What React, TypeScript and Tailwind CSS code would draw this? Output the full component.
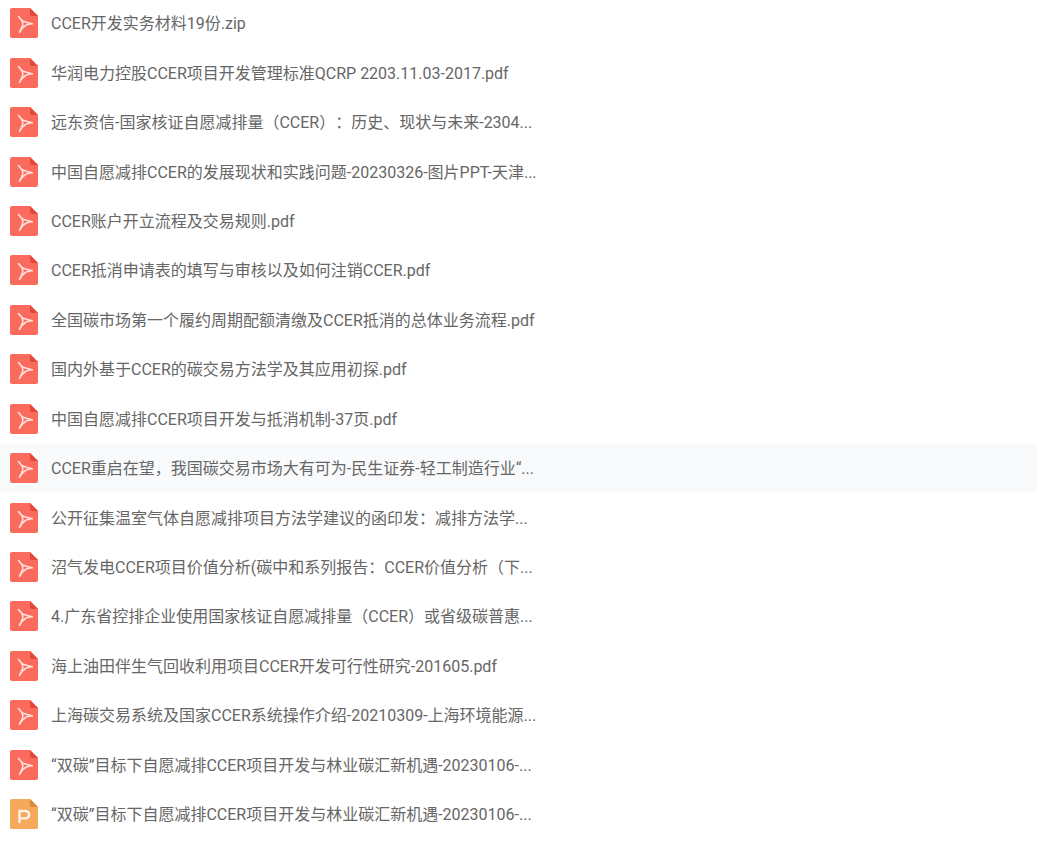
const files: { name: string; type: "pdf" | "ppt"; hover?: boolean }[] = [
  { name: "CCER开发实务材料19份.zip", type: "pdf" },
  { name: "华润电力控股CCER项目开发管理标准QCRP 2203.11.03-2017.pdf", type: "pdf" },
  { name: "远东资信-国家核证自愿减排量（CCER）：历史、现状与未来-2304...", type: "pdf" },
  { name: "中国自愿减排CCER的发展现状和实践问题-20230326-图片PPT-天津...", type: "pdf" },
  { name: "CCER账户开立流程及交易规则.pdf", type: "pdf" },
  { name: "CCER抵消申请表的填写与审核以及如何注销CCER.pdf", type: "pdf" },
  { name: "全国碳市场第一个履约周期配额清缴及CCER抵消的总体业务流程.pdf", type: "pdf" },
  { name: "国内外基于CCER的碳交易方法学及其应用初探.pdf", type: "pdf" },
  { name: "中国自愿减排CCER项目开发与抵消机制-37页.pdf", type: "pdf" },
  { name: "CCER重启在望，我国碳交易市场大有可为-民生证券-轻工制造行业“...", type: "pdf", hover: true },
  { name: "公开征集温室气体自愿减排项目方法学建议的函印发：减排方法学...", type: "pdf" },
  { name: "沼气发电CCER项目价值分析(碳中和系列报告：CCER价值分析（下...", type: "pdf" },
  { name: "4.广东省控排企业使用国家核证自愿减排量（CCER）或省级碳普惠...", type: "pdf" },
  { name: "海上油田伴生气回收利用项目CCER开发可行性研究-201605.pdf", type: "pdf" },
  { name: "上海碳交易系统及国家CCER系统操作介绍-20210309-上海环境能源...", type: "pdf" },
  { name: "“双碳”目标下自愿减排CCER项目开发与林业碳汇新机遇-20230106-...", type: "pdf" },
  { name: "“双碳”目标下自愿减排CCER项目开发与林业碳汇新机遇-20230106-...", type: "ppt" },
];

function FileIcon({ type }: { type: "pdf" | "ppt" }) {
  const body = type === "pdf" ? "#fb6b5d" : "#f4a95d";
  const fold = type === "pdf" ? "#e2483a" : "#d9873a";
  return (
    <svg width="28" height="30" viewBox="0 0 28 30" className="shrink-0">
      <path d="M2 0H20L28 8V28a2 2 0 0 1-2 2H2a2 2 0 0 1-2-2V2a2 2 0 0 1 2-2Z" fill={body} />
      <path d="M20 0L28 8H22a2 2 0 0 1-2-2Z" fill={fold} />
      {type === "pdf" ? (
        <path
          d="M8.5 8.5C10.5 11 12 13 14 13.5C16.5 14.2 19.5 15 22.3 15.7C19.5 16 17 16.3 15.5 17.5C13 19 11 21.5 9.5 24.3C10.5 21.5 12.5 19 12.8 16.5C13 13.5 10.5 10.5 8.5 8.5Z"
          fill="none"
          stroke="#ffe0da"
          strokeWidth="1.6"
          strokeLinejoin="round"
        />
      ) : (
        <path d="M9.5 24V12H15.5a3.7 3.7 0 0 1 0 7.4H9.5" fill="none" stroke="#fff3e4" strokeWidth="2.4" />
      )}
    </svg>
  );
}

export default function App() {
  return (
    <div className="min-h-[845px] overflow-hidden bg-white font-['Roboto','Noto_Sans_CJK_SC',sans-serif] text-[16px] text-[#666666] [text-spacing-trim:space-all]">
      <ul className="-mt-[1px]">
        {files.map((f, i) => (
          <li
            key={i}
            className={`mb-[1px] flex h-[48.44px] items-center pl-[10px] ${f.hover ? "bg-[#f8fafc]" : ""}`}
          >
            <FileIcon type={f.type} />
            <span className="ml-[13px] mt-[2px] block whitespace-nowrap">{f.name}</span>
          </li>
        ))}
      </ul>
    </div>
  );
}
